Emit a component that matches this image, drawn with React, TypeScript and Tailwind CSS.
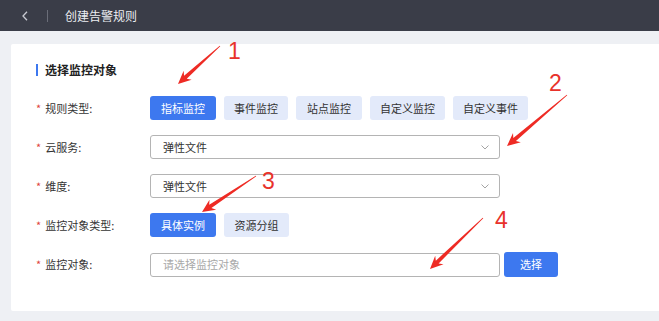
import React from 'react';

const font = { fontFamily: '"Noto Sans CJK SC", "Noto Sans", sans-serif' };

type Arrow = { tx: number; ty: number; px: number; py: number };

const arrows: Arrow[] = [
  { tx: 220, ty: 46, px: 178, py: 84 },
  { tx: 567, ty: 95, px: 507, py: 146 },
  { tx: 256, ty: 176, px: 202, py: 212 },
  { tx: 483, ty: 218, px: 430, py: 269 },
];

function arrowPoints({ tx, ty, px, py }: Arrow) {
  const dx = px - tx;
  const dy = py - ty;
  const len = Math.hypot(dx, dy);
  const ux = dx / len;
  const uy = dy / len;
  const nx = -uy;
  const ny = ux;
  const hl = 13;
  const hw = 6;
  const sw = 2;
  const bx = px - ux * hl;
  const by = py - uy * hl;
  const nbx = px - ux * (hl - 3);
  const nby = py - uy * (hl - 3);
  const pts = [
    [tx + nx * 0.4, ty + ny * 0.4],
    [nbx + nx * sw, nby + ny * sw],
    [bx + nx * hw, by + ny * hw],
    [px, py],
    [bx - nx * hw, by - ny * hw],
    [nbx - nx * sw, nby - ny * sw],
    [tx - nx * 0.4, ty - ny * 0.4],
  ];
  return pts.map((p) => p.join(',')).join(' ');
}

const Label = ({ text }: { text: string }) => (
  <div className="w-[114px] shrink-0 flex items-center text-[11px] text-[#333]">
    <span className="text-[#e0443c] mr-[4px] text-[11px]">*</span>
    {text}
  </div>
);

const Btn = ({ text, active, w }: { text: string; active?: boolean; w: string }) => (
  <div
    className={`${w} h-[24px] rounded-[3px] flex items-center justify-center text-[11px] ${
      active ? 'bg-[#3d78ef] text-white' : 'bg-[#e3eafa] text-[#333]'
    }`}
  >
    {text}
  </div>
);

const Select = ({ value }: { value: string }) => (
  <div className="w-[350px] h-[24px] border border-[#b4b4b4] rounded-[3px] flex items-center justify-between pl-[12px] pr-[10px] text-[11px] text-[#333]">
    <span>{value}</span>
    <svg width="8" height="5" viewBox="0 0 8 5" fill="none">
      <path d="M0.5 0.5 L4 4 L7.5 0.5" stroke="#9a9a9a" strokeWidth="0.9" />
    </svg>
  </div>
);

export default function App() {
  return (
    <div className="relative w-[659px] h-[321px] bg-[#eef0f4] flex flex-col overflow-hidden" style={font}>
      <div className="h-[31px] bg-[#3a3d48] flex items-center shrink-0">
        <svg className="ml-[22px]" width="6" height="10" viewBox="0 0 6 10" fill="none">
          <path d="M5 0.8 L1 5 L5 9.2" stroke="#c8cad2" strokeWidth="1.3" />
        </svg>
        <div className="ml-[19px] w-px h-[12px] bg-[#6a6d78]" />
        <div className="ml-[17px] text-[12px] text-[#eceef2]">创建告警规则</div>
      </div>

      <div className="pt-[13px] pl-[11px]">
        <div className="h-[267px] bg-white rounded-l-[2px] pl-[25px] pt-[19px]">
          <div className="flex items-center h-[14px]">
            <div className="w-[2px] h-[12px] bg-[#3d78ef]" />
            <div className="ml-[7px] text-[12px] font-bold text-[#222]">选择监控对象</div>
          </div>

          <div className="mt-[19px] flex flex-col gap-[15px]">
            <div className="flex">
              <Label text="规则类型:" />
              <div className="flex gap-[8px]">
                <Btn text="指标监控" active w="w-[66px]" />
                <Btn text="事件监控" w="w-[64px]" />
                <Btn text="站点监控" w="w-[66px]" />
                <Btn text="自定义监控" w="w-[75px]" />
                <Btn text="自定义事件" w="w-[75px]" />
              </div>
            </div>
            <div className="flex">
              <Label text="云服务:" />
              <Select value="弹性文件" />
            </div>
            <div className="flex">
              <Label text="维度:" />
              <Select value="弹性文件" />
            </div>
            <div className="flex">
              <Label text="监控对象类型:" />
              <div className="flex gap-[8px]">
                <Btn text="具体实例" active w="w-[66px]" />
                <Btn text="资源分组" w="w-[65px]" />
              </div>
            </div>
            <div className="flex items-center">
              <Label text="监控对象:" />
              <div className="w-[350px] h-[24px] border border-[#b4b4b4] rounded-[3px] flex items-center pl-[12px] text-[11px] text-[#a8a8a8]">
                请选择监控对象
              </div>
              <div className="ml-[4px] w-[54px] h-[25px] rounded-[3px] bg-[#3d78ef] text-white text-[11px] flex items-center justify-center">
                选择
              </div>
            </div>
          </div>
        </div>
      </div>

      <svg className="absolute inset-0 pointer-events-none" width="659" height="321">
        {arrows.map((a, i) => (
          <polygon key={i} points={arrowPoints(a)} fill="#ee2b24" />
        ))}
      </svg>
      {[
        { n: '1', x: 'left-[228px] top-[38px]' },
        { n: '2', x: 'left-[549px] top-[70px]' },
        { n: '3', x: 'left-[262px] top-[168px]' },
        { n: '4', x: 'left-[495px] top-[207px]' },
      ].map((d) => (
        <div
          key={d.n}
          className={`absolute ${d.x} text-[23px] leading-[26px] text-[#e8322b]`}
          style={{ fontFamily: '"Liberation Sans", sans-serif' }}
        >
          {d.n}
        </div>
      ))}
    </div>
  );
}
